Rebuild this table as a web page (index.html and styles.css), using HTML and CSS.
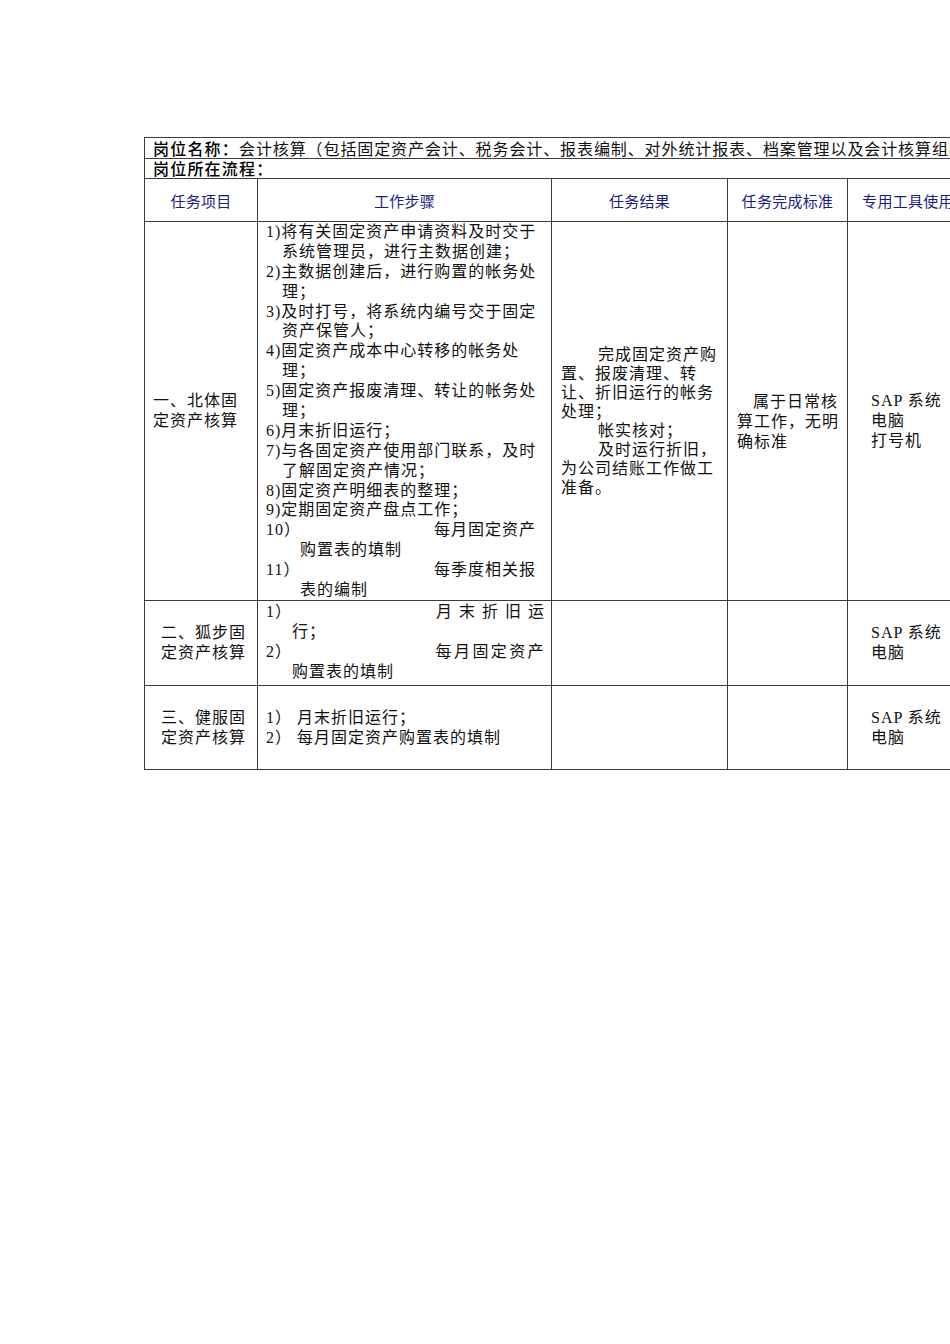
FILE: index.html
```html
<!DOCTYPE html>
<html lang="zh-CN">
<head>
<meta charset="utf-8">
<title>岗位说明</title>
<link rel="stylesheet" href="styles.css">
</head>
<body>
<div class="page">
  <table class="duty">
    <colgroup>
      <col class="c1"><col class="c2"><col class="c3"><col class="c4"><col class="c5">
    </colgroup>
    <tr class="title-row">
      <td colspan="5" class="title"><div class="tl tl1"><span class="label">岗位名称：</span>会计核算（包括固定资产会计、税务会计、报表编制、对外统计报表、档案管理以及会计核算组的工作）</div></td>
    </tr>
    <tr class="title-row">
      <td colspan="5" class="title"><div class="tl tl2"><span class="label">岗位所在流程：</span></div></td>
    </tr>
    <tr class="head-row">
      <th>任务项目</th>
      <th>工作步骤</th>
      <th>任务结果</th>
      <th>任务完成标准</th>
      <th>专用工具使用</th>
    </tr>
    <tr class="row1">
      <td class="item item-first"><div class="ln">一、北体固</div><div class="ln">定资产核算</div></td>
      <td class="steps top">
        <div class="ln">1)将有关固定资产申请资料及时交于</div>
        <div class="ln cont">系统管理员，进行主数据创建；</div>
        <div class="ln">2)主数据创建后，进行购置的帐务处</div>
        <div class="ln cont">理；</div>
        <div class="ln">3)及时打号，将系统内编号交于固定</div>
        <div class="ln cont">资产保管人；</div>
        <div class="ln">4)固定资产成本中心转移的帐务处</div>
        <div class="ln cont">理；</div>
        <div class="ln">5)固定资产报废清理、转让的帐务处</div>
        <div class="ln cont">理；</div>
        <div class="ln">6)月末折旧运行；</div>
        <div class="ln">7)与各固定资产使用部门联系，及时</div>
        <div class="ln cont">了解固定资产情况；</div>
        <div class="ln">8)固定资产明细表的整理；</div>
        <div class="ln">9)定期固定资产盘点工作；</div>
        <div class="ln split split1"><span>10）</span><span>每月固定资产</span></div>
        <div class="ln cont2">购置表的填制</div>
        <div class="ln split split1"><span>11）</span><span>每季度相关报</span></div>
        <div class="ln cont2">表的编制</div>
      </td>
      <td class="result">
        <div class="inner">
          <div class="ln ind">完成固定资产购</div>
          <div class="ln">置、报废清理、转</div>
          <div class="ln">让、折旧运行的帐务</div>
          <div class="ln">处理；</div>
          <div class="ln ind">帐实核对；</div>
          <div class="ln ind">及时运行折旧，</div>
          <div class="ln">为公司结账工作做工</div>
          <div class="ln">准备。</div>
        </div>
      </td>
      <td class="standard">
        <div class="inner">
          <div class="ln ind1">属于日常核</div>
          <div class="ln">算工作，无明</div>
          <div class="ln">确标准</div>
        </div>
      </td>
      <td class="tools">
        <div class="inner">
          <div class="ln">SAP 系统</div>
          <div class="ln">电脑</div>
          <div class="ln">打号机</div>
        </div>
      </td>
    </tr>
    <tr class="row2">
      <td class="item"><div class="ln">二、狐步固</div><div class="ln">定资产核算</div></td>
      <td class="steps top">
        <div class="inner2">
          <div class="ln split"><span>1）</span><span class="wide">月末折旧运</span></div>
          <div class="ln cont3">行；</div>
          <div class="ln split"><span>2）</span><span class="mid">每月固定资产</span></div>
          <div class="ln cont3">购置表的填制</div>
        </div>
      </td>
      <td></td>
      <td></td>
      <td class="tools"><div class="ln">SAP 系统</div><div class="ln">电脑</div></td>
    </tr>
    <tr class="row3">
      <td class="item"><div class="ln">三、健服固</div><div class="ln">定资产核算</div></td>
      <td class="steps">
        <div class="ln">1） 月末折旧运行；</div>
        <div class="ln">2） 每月固定资产购置表的填制</div>
      </td>
      <td></td>
      <td></td>
      <td class="tools"><div class="ln">SAP 系统</div><div class="ln">电脑</div></td>
    </tr>
  </table>
</div>
</body>
</html>
```

FILE: styles.css
```css
html, body {
  margin: 0;
  padding: 0;
  background: #ffffff;
}

.page {
  width: 950px;
  height: 1344px;
  overflow: hidden;
  padding-top: 137px;
  padding-left: 144px;
  box-sizing: border-box;
}

.duty {
  border-collapse: collapse;
  table-layout: fixed;
  width: 824px;
  font-family: "Liberation Serif", "Noto Sans CJK SC", serif;
  font-size: 16px;
  letter-spacing: 1px;
  color: #111111;
}

.c1 { width: 113px; }
.c2 { width: 294px; }
.c3 { width: 176px; }
.c4 { width: 120px; }
.c5 { width: 121px; }

.duty td, .duty th {
  border: 1px solid #3c3c3c;
  padding: 0;
  vertical-align: middle;
  overflow: hidden;
}

.ln {
  white-space: nowrap;
  line-height: 20px;
  height: 20px;
}

/* title rows */
.title-row td {
  padding-left: 8px;
}

.tl {
  white-space: nowrap;
  overflow: hidden;
  font-size: 16px;
  letter-spacing: 0.9px;
}

.tl1 { height: 20px; line-height: 20px; }
.tl2 { height: 19px; line-height: 19px; }

.label {
  font-family: "Noto Sans CJK SC", sans-serif;
  font-weight: 500;
  color: #000000;
  letter-spacing: 1.2px;
}

/* header */
.head-row th {
  height: 42px;
  font-family: "Noto Sans CJK SC", sans-serif;
  font-weight: 400;
  font-size: 15px;
  letter-spacing: 0.3px;
  color: #1c1c80;
  text-align: center;
}

.row1 td { height: 378px; }
.row2 td { height: 84px; }
.row3 td { height: 83px; }

.row1 .steps .ln { line-height: 19.9px; height: 19.9px; }

.item { padding-left: 16px !important; }
.item-first { padding-left: 8px !important; }

.steps {
  padding-left: 8px !important;
  padding-right: 7px !important;
}

.steps.top { vertical-align: top; }
.inner2 { padding-top: 1px; }

.cont { padding-left: 16px; }
.cont2 { padding-left: 34px; }
.cont3 { padding-left: 26px; }

.split {
  display: flex;
  justify-content: space-between;
}

.split1 { padding-right: 8px; }

.wide { letter-spacing: 7px; margin-right: -7px; }
.mid { letter-spacing: 2.4px; margin-right: -2px; }

.result { padding-left: 9px !important; }
.inner { padding-top: 20px; }

.result .ln { line-height: 19px; height: 19px; }

.ind { padding-left: 37px; }

.standard { padding-left: 9px !important; }
.standard .ln:last-child { height: 19px; line-height: 19px; }
.ind1 { padding-left: 16px; }

.tools { padding-left: 23px !important; }
```
